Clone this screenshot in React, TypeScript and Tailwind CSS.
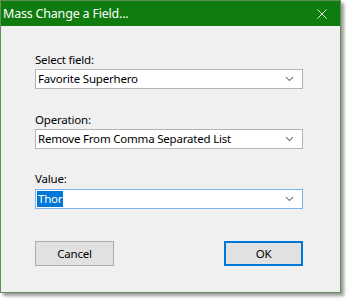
const FONT = "font-['Noto_Sans','Open_Sans',sans-serif]";

function Chevron() {
  return (
    <svg width="9" height="6" viewBox="0 0 9 6" className="shrink-0">
      <path d="M1 1.2 L4.5 4.6 L8 1.2" fill="none" stroke="#707070" strokeWidth="1.1" />
    </svg>
  );
}

function Combo({ value, focused, selected }: { value: string; focused?: boolean; selected?: boolean }) {
  return (
    <div
      className={`flex items-center h-[20px] w-[268px] bg-white border pl-[1px] pr-[8px] ${
        focused ? "border-[#7ab4ea]" : "border-[#b4b4b4]"
      }`}
    >
      <div className="flex-1 flex items-center text-[11.5px] leading-[16px] tracking-[-0.2px] text-black">
        {selected ? (
          <span className="bg-[#0078d7] text-white px-[1px]">{value}</span>
        ) : (
          <span className="pl-[1px]">{value}</span>
        )}
      </div>
      <Chevron />
    </div>
  );
}

export default function App() {
  return (
    <div className={`w-[350px] h-[303px] bg-white ${FONT}`}>
      <div className="w-[341px] h-[293px] flex flex-col border border-[#5e8f55] shadow-[3px_3px_3px_rgba(0,0,0,0.4)]">
        {/* Title bar */}
        <div className="h-[25px] bg-[#107c10] flex items-center justify-between pl-[2px] pr-[13px]">
          <span className="text-white text-[12.5px] leading-[18px] tracking-[-0.2px]">Mass Change a Field...</span>
          <svg width="10" height="10" viewBox="0 0 10 10">
            <path d="M0.5 0.5 L9.5 9.5 M9.5 0.5 L0.5 9.5" stroke="#e8f2e8" strokeWidth="1" />
          </svg>
        </div>

        {/* Body */}
        <div className="flex-1 bg-[#f0f0f0] flex flex-col pl-[34px] pt-[26px]">
          <div className="text-[11.5px] leading-[16px] tracking-[-0.2px] text-black mb-[1px]">Select field:</div>
          <Combo value="Favorite Superhero" />

          <div className="text-[11.5px] leading-[16px] tracking-[-0.2px] text-black mt-[23px] mb-[1px]">Operation:</div>
          <Combo value="Remove From Comma Separated List" />

          <div className="text-[11.5px] leading-[16px] tracking-[-0.2px] text-black mt-[22px] mb-[2px]">Value:</div>
          <Combo value="Thor" focused selected />

          <div className="flex w-[268px] justify-between mt-[32px]">
            <button className="w-[79px] h-[25px] bg-[#e1e1e1] border border-[#adadad] text-[11.5px] tracking-[-0.2px] text-black">
              Cancel
            </button>
            <button className="w-[79px] h-[25px] bg-[#e1e1e1] border-2 border-[#0078d7] text-[11.5px] tracking-[-0.2px] text-black">
              OK
            </button>
          </div>
        </div>
      </div>
    </div>
  );
}
